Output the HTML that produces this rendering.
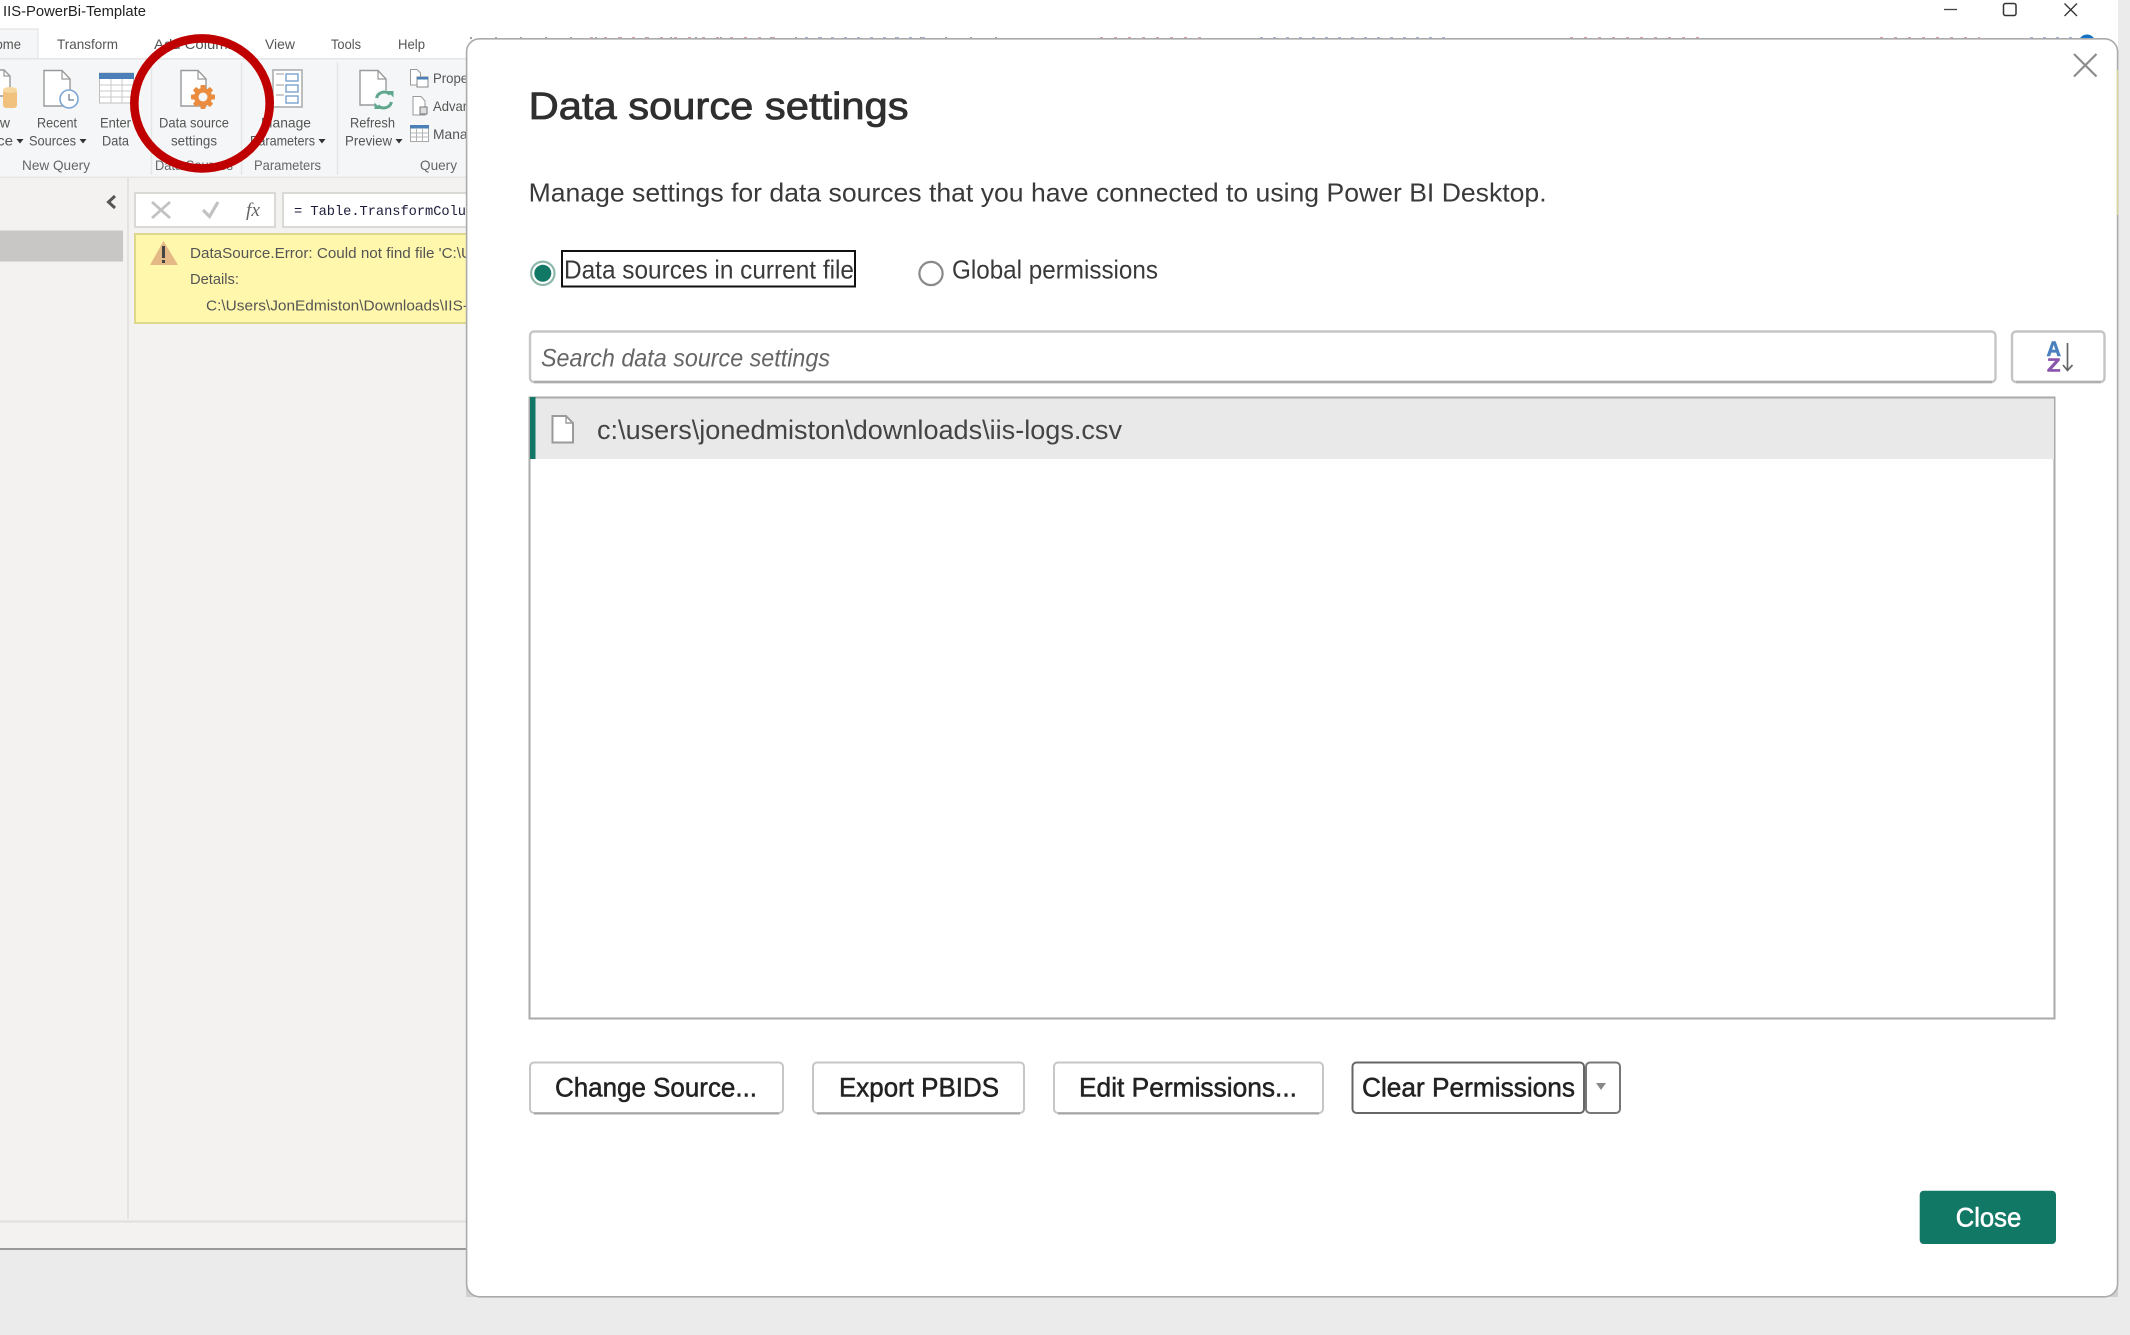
<!DOCTYPE html>
<html lang="en">
<head>
<meta charset="utf-8">
<title>Data source settings</title>
<style>
html,body{margin:0;padding:0;background:#ebebeb;width:2130px;height:1335px;overflow:hidden}
svg{display:block;position:absolute;left:0;top:0;filter:blur(.35px)}
text{font-family:"Liberation Sans",sans-serif}
.rb{font-size:14px;fill:#555}
.grp{font-size:14px;fill:#666}
.tab{font-size:14px;fill:#555}
.dlg{font-size:26px;fill:#3a3a3a}
.btn{font-size:27px;fill:#222;stroke:#222;stroke-width:.5}
.msg{font-size:15px;fill:#555}
.pg{fill:#fff;stroke:#9a9a9a;stroke-width:1.4}
</style>
</head>
<body>
<svg width="2130" height="1335" viewBox="0 0 2130 1335" xmlns="http://www.w3.org/2000/svg">
  <!-- window backgrounds -->
  <rect x="0" y="0" width="2130" height="1335" fill="#ebebeb"/>
  <rect x="0" y="0" width="2118" height="58" fill="#ffffff"/>
  <rect x="0" y="58" width="2118" height="120" fill="#f5f6f7"/>
  <rect x="0" y="58" width="2118" height="1.5" fill="#e4e4e4"/>
  <rect x="0" y="177" width="2118" height="1072" fill="#f3f2f0"/>
  <rect x="0" y="176.5" width="2118" height="1.5" fill="#e6e5e3"/>
  <rect x="127" y="177" width="2" height="1042" fill="#e4e3e0"/>
  <rect x="0" y="1220.5" width="2118" height="2" fill="#e0dfdc"/>
  <rect x="0" y="1248" width="2118" height="2" fill="#9a9a98"/>

  <!-- title bar -->
  <text x="3" y="16" font-size="15" fill="#222" textLength="143" lengthAdjust="spacingAndGlyphs">IIS-PowerBi-Template</text>
  <path d="M1944 9.5H1957" stroke="#444" stroke-width="1.3" fill="none"/>
  <rect x="2003.5" y="3.5" width="12.5" height="12" rx="2" fill="none" stroke="#333" stroke-width="1.5"/>
  <path d="M2064.5 3.5L2077 16M2077 3.5L2064.5 16" stroke="#333" stroke-width="1.3" fill="none"/>

  <!-- tabs -->
  <path d="M0 29H38V58H0Z" fill="#f5f6f7"/>
  <path d="M0 29H38V58" fill="none" stroke="#e4e4e4" stroke-width="1.2"/>
  <text class="tab" x="-14" y="49" textLength="35" lengthAdjust="spacingAndGlyphs">Home</text>
  <text class="tab" x="57" y="49" textLength="61" lengthAdjust="spacingAndGlyphs">Transform</text>
  <text class="tab" x="154" y="49" textLength="82" lengthAdjust="spacingAndGlyphs">Add Column</text>
  <text class="tab" x="265" y="49" textLength="30" lengthAdjust="spacingAndGlyphs">View</text>
  <text class="tab" x="331" y="49" textLength="30" lengthAdjust="spacingAndGlyphs">Tools</text>
  <text class="tab" x="398" y="49" textLength="27" lengthAdjust="spacingAndGlyphs">Help</text>

  <!-- group separators -->
  <path d="M151.5 62V175M241.5 62V175M337.5 62V175" stroke="#e6e6e6" stroke-width="1.5" fill="none"/>

  <!-- New source icon -->
  <path class="pg" d="M-4 70H4L10 76V96H-4Z"/>
  <path d="M4 70V76H10" fill="none" stroke="#9a9a9a" stroke-width="1.2"/>
  <rect x="3" y="90" width="14" height="18" rx="3" fill="#f1c27d"/>
  <ellipse cx="10" cy="90" rx="7" ry="3" fill="#f7d79f"/>

  <!-- Recent sources icon -->
  <path class="pg" d="M44 70.5H62L70 79V106H44Z"/>
  <path d="M62 70.5V79H70" fill="none" stroke="#9a9a9a" stroke-width="1.2"/>
  <circle cx="69" cy="99" r="9" fill="#fff" stroke="#7ea6d3" stroke-width="1.6"/>
  <path d="M69 94V100H74" fill="none" stroke="#6d7f92" stroke-width="1.3"/>

  <!-- Enter data icon -->
  <rect x="99.5" y="73" width="34" height="30" fill="#fff" stroke="#c0c0c0" stroke-width="1"/>
  <rect x="99" y="73" width="35" height="6" fill="#4a7fb8"/>
  <path d="M99.5 85H133.5M99.5 91H133.5M99.5 97H133.5M111 79V103M122 79V103" stroke="#c8c8c8" stroke-width="1" fill="none"/>

  <!-- Data source settings icon -->
  <path class="pg" d="M181 70.5H198L206 79V106H181Z"/>
  <path d="M198 70.5V79H206" fill="none" stroke="#9a9a9a" stroke-width="1.2"/>
  <g fill="#ea8b3d">
    <circle cx="203" cy="97" r="9"/>
    <rect x="200.5" y="85" width="5" height="24" rx="1"/>
    <rect x="200.5" y="85" width="5" height="24" rx="1" transform="rotate(45 203 97)"/>
    <rect x="200.5" y="85" width="5" height="24" rx="1" transform="rotate(90 203 97)"/>
    <rect x="200.5" y="85" width="5" height="24" rx="1" transform="rotate(135 203 97)"/>
  </g>
  <circle cx="203" cy="97" r="4.5" fill="#f5f6f7"/>

  <!-- Manage parameters icon -->
  <rect x="273" y="70" width="29" height="37" fill="#fff" stroke="#a8a8a8" stroke-width="1.5"/>
  <path d="M276 74H284M276 85H284M276 95H284" stroke="#9a9a9a" stroke-width="1.1" fill="none"/>
  <g fill="#fff" stroke="#6f9ccb" stroke-width="1.3">
    <rect x="286" y="74" width="12" height="7"/>
    <rect x="286" y="85" width="12" height="7"/>
    <rect x="286" y="96" width="12" height="7"/>
  </g>

  <!-- Refresh preview icon -->
  <path class="pg" d="M360 70.5H378L386 79V105H360Z"/>
  <path d="M378 70.5V79H386" fill="none" stroke="#9a9a9a" stroke-width="1.2"/>
  <circle cx="384" cy="100" r="10" fill="#f5f6f7"/>
  <path d="M376.5 98A8 8 0 0 1 390 94.5M391.5 102A8 8 0 0 1 378 105.5" fill="none" stroke="#5fa78d" stroke-width="3"/>
  <path d="M387 91H393.5V97.5ZM381 109H374.5V102.5Z" fill="#5fa78d"/>

  <!-- small query icons -->
  <path d="M410.5 69.5H417L420.5 73V85H410.5Z" fill="#fff" stroke="#9a9a9a"/>
  <rect x="417" y="77" width="11" height="10" fill="#fff" stroke="#888"/>
  <rect x="417" y="77" width="11" height="2.5" fill="#4a7fb8"/>
  <path d="M413 96.5H421L425 101V115H413Z" fill="#fff" stroke="#9a9a9a"/>
  <rect x="420" y="107" width="7" height="7" fill="#ddd" stroke="#777"/>
  <rect x="410.5" y="125.5" width="18" height="16" fill="#fff" stroke="#a8a8a8"/>
  <rect x="410" y="125" width="19" height="3.5" fill="#4a7fb8"/>
  <path d="M410.5 133H428.5M410.5 137H428.5M416.5 128V141M422.5 128V141" stroke="#b5b5b5" stroke-width="1" fill="none"/>

  <!-- ribbon labels -->
  <text class="rb" x="-18" y="127.7" textLength="28" lengthAdjust="spacingAndGlyphs">New</text>
  <text class="rb" x="-35" y="145.7" textLength="48" lengthAdjust="spacingAndGlyphs">Source</text>
  <path d="M16.5 139H23.5L20 143.5Z" fill="#333"/>
  <text class="rb" x="37" y="127.7" textLength="40" lengthAdjust="spacingAndGlyphs">Recent</text>
  <text class="rb" x="29" y="145.7" textLength="47" lengthAdjust="spacingAndGlyphs">Sources</text>
  <path d="M79.5 139H86.5L83 143.5Z" fill="#333"/>
  <text class="rb" x="100" y="127.7" textLength="31" lengthAdjust="spacingAndGlyphs">Enter</text>
  <text class="rb" x="102" y="145.7" textLength="27" lengthAdjust="spacingAndGlyphs">Data</text>
  <text class="rb" x="159" y="127.7" textLength="70" lengthAdjust="spacingAndGlyphs">Data source</text>
  <text class="rb" x="171" y="145.7" textLength="46" lengthAdjust="spacingAndGlyphs">settings</text>
  <text class="rb" x="261" y="127.7" textLength="50" lengthAdjust="spacingAndGlyphs">Manage</text>
  <text class="rb" x="250" y="145.7" textLength="65" lengthAdjust="spacingAndGlyphs">Parameters</text>
  <path d="M318.5 139H325.5L322 143.5Z" fill="#333"/>
  <text class="rb" x="350" y="127.7" textLength="45" lengthAdjust="spacingAndGlyphs">Refresh</text>
  <text class="rb" x="345" y="145.7" textLength="47" lengthAdjust="spacingAndGlyphs">Preview</text>
  <path d="M395.5 139H402.5L399 143.5Z" fill="#333"/>
  <text class="rb" x="433" y="83" textLength="60" lengthAdjust="spacingAndGlyphs">Properties</text>
  <text class="rb" x="433" y="111" textLength="58" lengthAdjust="spacingAndGlyphs">Advanced</text>
  <text class="rb" x="433" y="139" textLength="50" lengthAdjust="spacingAndGlyphs">Manage</text>

  <text class="grp" x="22" y="170" textLength="68" lengthAdjust="spacingAndGlyphs">New Query</text>
  <text class="grp" x="155" y="170" textLength="78" lengthAdjust="spacingAndGlyphs">Data Sources</text>
  <text class="grp" x="254" y="170" textLength="67" lengthAdjust="spacingAndGlyphs">Parameters</text>
  <text class="grp" x="420" y="170" textLength="37" lengthAdjust="spacingAndGlyphs">Query</text>

  <!-- left pane -->
  <path d="M115 196L108.5 202L115 208" fill="none" stroke="#555" stroke-width="3"/>
  <rect x="0" y="230.5" width="123" height="31" fill="#c8c7c5"/>

  <!-- formula bar -->
  <rect x="135" y="193" width="140" height="34" fill="#fff" stroke="#d9d9d6" stroke-width="2"/>
  <path d="M152 202L170 218M170 202L152 218" stroke="#c2c2c2" stroke-width="2.8" fill="none"/>
  <path d="M203 210L209.5 216.5L218 202" stroke="#c2c2c2" stroke-width="3.2" fill="none"/>
  <text x="246" y="216" font-size="19" font-style="italic" fill="#666" style="font-family:'Liberation Serif',serif" textLength="14" lengthAdjust="spacingAndGlyphs">fx</text>
  <rect x="283" y="193" width="190" height="34" fill="#fff" stroke="#d9d9d6" stroke-width="2"/>
  <text x="294" y="215" font-size="13.7" fill="#1c1c3c" style="font-family:'Liberation Mono',monospace" textLength="172" lengthAdjust="spacing">= Table.TransformColu</text>

  <!-- warning -->
  <rect x="135" y="234" width="340" height="89" fill="#fff7ac" stroke="#ddd88c" stroke-width="2"/>
  <path d="M163.5 241L178 265H150Z" fill="#e5b985"/>
  <rect x="162" y="246" width="3" height="12" fill="#444"/>
  <rect x="162" y="260" width="3" height="3" fill="#444"/>
  <text class="msg" x="190" y="258" textLength="282" lengthAdjust="spacingAndGlyphs">DataSource.Error: Could not find file 'C:\U</text>
  <text class="msg" x="190" y="284" textLength="49" lengthAdjust="spacingAndGlyphs">Details:</text>
  <text class="msg" x="206" y="310.7" textLength="262" lengthAdjust="spacingAndGlyphs">C:\Users\JonEdmiston\Downloads\IIS-</text>

  <!-- red annotation circle -->
  <ellipse cx="202" cy="103.4" rx="67.7" ry="65" fill="none" stroke="#c00000" stroke-width="8.6"/>

  <!-- specks above dialog -->
  <path d="M470 38H1000" stroke="#444" stroke-width="1" stroke-dasharray="2 23" fill="none"/>
  <path d="M590 38H780M1100 38H1210M1570 38H1700M1880 38H1980" stroke="#b5423f" stroke-width="1" stroke-dasharray="3 11" fill="none"/>
  <path d="M805 38H930M1260 38H1450M2030 38H2075" stroke="#3d63b5" stroke-width="1" stroke-dasharray="3 10" fill="none"/>
  <circle cx="2087" cy="43" r="8.5" fill="#1473c4"/>

  <!-- dialog -->
  <path d="M466 52V1297H480V1284H466Z" fill="#d0d0d0"/>
  <path d="M2118 1284V1297H2104Z" fill="#d0d0d0"/>
  <rect x="466.6" y="38.8" width="1651" height="1258" rx="13" fill="#fff" stroke="#ababab" stroke-width="1.6"/>
  <path d="M2117.5 70V215" stroke="#d9d49a" stroke-width="1.5" fill="none"/>

  <path d="M2074 54L2096.5 76.5M2096.5 54L2074 76.5" stroke="#8c8c8c" stroke-width="2.2" fill="none"/>

  <text x="528.6" y="119" font-size="38" fill="#2f2f2f" stroke="#2f2f2f" stroke-width=".8" textLength="380" lengthAdjust="spacingAndGlyphs">Data source settings</text>
  <text class="dlg" x="528.6" y="201.7" textLength="1018" lengthAdjust="spacingAndGlyphs">Manage settings for data sources that you have connected to using Power BI Desktop.</text>

  <!-- radios -->
  <circle cx="542.8" cy="273.3" r="11.7" fill="#fff" stroke="#8fb8ad" stroke-width="2.2"/>
  <circle cx="542.8" cy="273.3" r="8.5" fill="#117865"/>
  <rect x="562" y="251" width="293" height="35.5" fill="none" stroke="#111" stroke-width="2"/>
  <text class="dlg" x="564" y="278.7" textLength="290" lengthAdjust="spacingAndGlyphs">Data sources in current file</text>
  <circle cx="931" cy="273.5" r="11.6" fill="#fff" stroke="#8a8a8a" stroke-width="2.2"/>
  <text class="dlg" x="952" y="278.7" textLength="206" lengthAdjust="spacingAndGlyphs">Global permissions</text>

  <!-- search -->
  <rect x="530" y="331.5" width="1465.5" height="50.5" rx="4" fill="#fff" stroke="#c6c6c6" stroke-width="2.4"/>
  <path d="M534 382H1992" stroke="#ababab" stroke-width="2.4" fill="none"/>
  <text x="541" y="366.7" font-size="25" font-style="italic" fill="#666" textLength="289" lengthAdjust="spacingAndGlyphs">Search data source settings</text>

  <!-- sort button -->
  <rect x="2012" y="331.5" width="92.5" height="50.5" rx="4" fill="#fff" stroke="#c4c4c4" stroke-width="2.4"/>
  <path d="M2016 382H2101" stroke="#b0b0b0" stroke-width="2.4" fill="none"/>
  <text x="2046.5" y="356" font-size="21" font-weight="700" fill="#4a80bd" stroke="#4a80bd" stroke-width=".6" textLength="14.5" lengthAdjust="spacingAndGlyphs">A</text>
  <text x="2047" y="371.5" font-size="18" font-weight="700" fill="#8a55ad" stroke="#8a55ad" stroke-width=".6" textLength="13.5" lengthAdjust="spacingAndGlyphs">Z</text>
  <path d="M2067.5 343V370M2063 365L2067.5 370.5L2072.5 365" fill="none" stroke="#666" stroke-width="1.7"/>

  <!-- list -->
  <rect x="529.5" y="397.5" width="1525" height="621" fill="#fff" stroke="#aaa" stroke-width="2"/>
  <rect x="530.5" y="398.5" width="1523.5" height="60.5" fill="#e9e9e9"/>
  <rect x="530" y="397" width="5.5" height="62" fill="#117865"/>
  <path d="M552.5 416H566L573 423V442.5H552.5Z" fill="#fff" stroke="#9b9b9b" stroke-width="2"/>
  <path d="M566 416V423H573" fill="none" stroke="#9b9b9b" stroke-width="1.4"/>
  <text x="597" y="439" font-size="27" fill="#444" textLength="525" lengthAdjust="spacingAndGlyphs">c:\users\jonedmiston\downloads\iis-logs.csv</text>

  <!-- buttons -->
  <g fill="#fff" stroke="#c6c6c6" stroke-width="2">
    <rect x="530" y="1062.5" width="253" height="50.5" rx="4"/>
    <rect x="813" y="1062.5" width="211" height="50.5" rx="4"/>
    <rect x="1054" y="1062.5" width="269" height="50.5" rx="4"/>
  </g>
  <path d="M534 1113.5H779M817 1113.5H1020M1058 1113.5H1319" stroke="#a6a6a6" stroke-width="2" fill="none"/>
  <rect x="1352.5" y="1062.5" width="231.5" height="50.5" rx="4" fill="#fff" stroke="#666" stroke-width="2"/>
  <rect x="1586" y="1062.5" width="34" height="50.5" rx="4" fill="#fff" stroke="#777" stroke-width="2"/>
  <path d="M1596 1083H1606L1601 1090Z" fill="#888"/>
  <text class="btn" x="555" y="1096.7" textLength="202" lengthAdjust="spacingAndGlyphs">Change Source...</text>
  <text class="btn" x="839" y="1096.7" textLength="160" lengthAdjust="spacingAndGlyphs">Export PBIDS</text>
  <text class="btn" x="1079" y="1096.7" textLength="218" lengthAdjust="spacingAndGlyphs">Edit Permissions...</text>
  <text class="btn" x="1362" y="1096.7" textLength="213" lengthAdjust="spacingAndGlyphs">Clear Permissions</text>

  <!-- close -->
  <rect x="1919.7" y="1190.7" width="136.3" height="53.3" rx="4" fill="#117865"/>
  <text x="1955.7" y="1226.5" font-size="27" fill="#fff" stroke="#fff" stroke-width=".6" textLength="65.5" lengthAdjust="spacingAndGlyphs">Close</text>
</svg>
</body>
</html>
